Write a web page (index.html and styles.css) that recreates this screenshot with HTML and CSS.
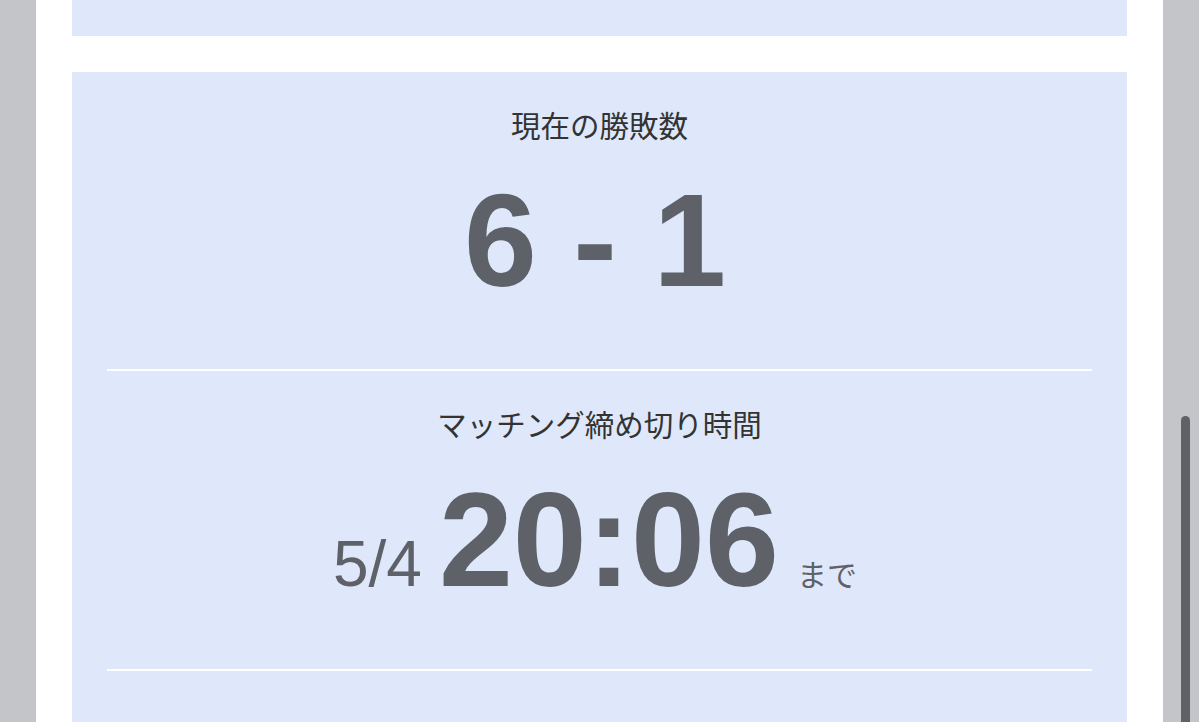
FILE: index.html
```html
<!DOCTYPE html>
<html lang="ja">
<head>
<meta charset="UTF-8" />
<meta name="viewport" content="width=device-width, initial-scale=1" />
<title>マッチング状況</title>
<link rel="stylesheet" href="styles.css">
</head>
<body>

<div class="page">
  <div class="card card-tail"></div>

  <div class="card">
    <div class="stat">
      <div class="stat-label">現在の勝敗数</div>
      <div class="stat-value">6 - 1</div>
    </div>
    <div class="divider"></div>
    <div class="stat">
      <div class="stat-label">マッチング締め切り時間</div>
      <div class="stat-value"><span class="deadline-date">5/4</span><span class="deadline-time">20:06</span><span class="deadline-until">まで</span></div>
    </div>
    <div class="divider"></div>
    <div class="stat stat-empty"></div>
  </div>
</div>

<div class="scroll-thumb"></div>

</body>
</html>
```

FILE: styles.css
```css
html, body {
  height: 100%;
  overflow: hidden;
}
body {
  margin: 0;
  background: #c4c5c9;
  font-family: "Noto Sans CJK JP", "Noto Sans", sans-serif;
  color: #333;
}
.page {
  margin: 0 36px;
  padding: 0 36px;
  min-height: 100%;
  background: #fff;
}
.card {
  background: #dee8fa;
  padding: 0 35px;
}
.card-tail {
  height: 36px;
  margin-bottom: 36px;
}
.stat {
  padding: 37px 0 62px;
  text-align: center;
}
.stat-empty {
  height: 10px;
}
.stat-label {
  font-size: 29.5px;
  line-height: 30px;
  color: #333;
}
.stat-value {
  margin-top: 36px;
  padding-right: 9px;
  font-family: "Liberation Sans", Arial, sans-serif;
  font-weight: bold;
  font-size: 131px;
  line-height: 132px;
  color: #5e6167;
}
.deadline-date {
  margin-right: 17px;
  font-weight: normal;
  font-size: 64px;
  line-height: 1;
}
.deadline-time {
  font-size: 133px;
}
.deadline-until {
  margin-left: 18px;
  font-family: "Noto Sans CJK JP", sans-serif;
  font-weight: normal;
  font-size: 30px;
  line-height: 1;
}
.divider {
  height: 2px;
  background: #fff;
}
.scroll-thumb {
  position: fixed;
  right: 9px;
  top: 416px;
  width: 9px;
  height: 340px;
  border-radius: 5px;
  background: #606066;
}
```
